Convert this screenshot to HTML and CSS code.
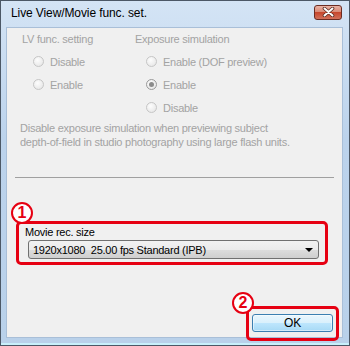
FILE: index.html
```html
<!DOCTYPE html>
<html lang="en">
<head>
    <meta charset="UTF-8">
    <title>Live View/Movie func. set.</title>
    <link rel="stylesheet" href="styles.css">
</head>
<body>
    <div class="window">
        <div class="titleBar">
            <span class="title">Live View/Movie func. set.</span>
            <span class="closeBtn">
                <svg width="13" height="10" viewBox="0 0 13 10">
                    <path d="M2.5 1.5 L10.5 8.5 M10.5 1.5 L2.5 8.5" stroke="#5a2a20" stroke-width="3.6" stroke-linecap="round"/>
                    <path d="M2.5 1.5 L10.5 8.5 M10.5 1.5 L2.5 8.5" stroke="#ffffff" stroke-width="2" stroke-linecap="round"/>
                </svg>
            </span>
        </div>
        <div class="client">
            <div class="settings">
                <div class="group groupLv">
                    <div class="heading">LV func. setting</div>
                    <div class="radio"><span class="dot"></span>Disable</div>
                    <div class="radio"><span class="dot"></span>Enable</div>
                </div>
                <div class="group groupExp">
                    <div class="heading">Exposure simulation</div>
                    <div class="radio"><span class="dot"></span>Enable (DOF preview)</div>
                    <div class="radio"><span class="dot checked"></span>Enable</div>
                    <div class="radio"><span class="dot"></span>Disable</div>
                </div>
            </div>
            <p class="note">Disable exposure simulation when previewing subject<br>depth-of-field in studio photography using large flash units.</p>
            <div class="sep"></div>
            <div class="highlight movieBox">
                <span class="badge badge1">1</span>
                <div class="label">Movie rec. size</div>
                <div class="combo">
                    <span class="comboText">1920x1080  25.00 fps Standard (IPB)</span>
                    <span class="arrow"></span>
                </div>
            </div>
            <div class="footer">
                <div class="highlight okBox">
                    <span class="badge badge2">2</span>
                    <div class="okBtn">OK</div>
                </div>
            </div>
        </div>
    </div>
</body>
</html>
```

FILE: styles.css
```css
body {
    margin: 0;
    font-family: "Liberation Sans", Arial, sans-serif;
    font-size: 11px;
    letter-spacing: -0.25px;
    background: #ffffff;
}
.window {
    box-sizing: border-box;
    width: 350px;
    height: 346px;
    border: 1px solid #4c5866;
    padding: 0 7px 8px 6px;
    background: linear-gradient(#d4e4f5, #bcd3ec 40%, #b9d1ea);
    box-shadow: inset 0 -2px 0 #c8f0fb;
}
.titleBar {
    height: 27px;
    display: flex;
    align-items: center;
    justify-content: space-between;
}
.title {
    margin-left: 4px;
    margin-top: -3px;
    font-size: 12px;
    letter-spacing: -0.1px;
    color: #000000;
}
.closeBtn {
    box-sizing: border-box;
    width: 28px;
    height: 15px;
    margin-top: -5px;
    border: 1px solid #6b2c22;
    border-radius: 3px;
    background: linear-gradient(#eab3a5, #d98a76 45%, #c7472d 50%, #d2705a);
    display: flex;
    align-items: center;
    justify-content: center;
}
.closeBtn svg {
    display: block;
}
.client {
    height: 309px;
    background: #f0f0f0;
    box-shadow: 0 0 0 1px #a9bfd8;
    color: #a3a3a3;
}
.settings {
    display: flex;
}
.group {
    display: flex;
    flex-direction: column;
}
.groupLv {
    width: 113px;
    padding-left: 15px;
}
.heading {
    line-height: 22px;
}
.radio {
    height: 23px;
    display: flex;
    align-items: center;
    padding-left: 11px;
}
.dot {
    box-sizing: border-box;
    width: 11px;
    height: 11px;
    margin-right: 6px;
    border-radius: 50%;
    border: 1px solid #c6c6c6;
    background: radial-gradient(circle at 40% 35%, #fdfdfd, #e2e2e2);
    position: relative;
}
.dot.checked {
    border-color: #9a9a9a;
}
.dot.checked::after {
    content: "";
    position: absolute;
    left: 2px;
    top: 2px;
    width: 5px;
    height: 5px;
    border-radius: 50%;
    background: #8c8c8c;
}
.note {
    margin: 2px 0 0 13px;
    line-height: 14px;
}
.sep {
    height: 1px;
    margin: 28px 8px 0 8px;
    background: #a0a0a0;
}
.highlight {
    position: relative;
    border: 3px solid #e60012;
    border-radius: 5px;
}
.movieBox {
    width: 294px;
    height: 37px;
    margin: 43px 0 0 9px;
    padding: 1px 6px 0 6px;
}
.label {
    color: #000000;
    line-height: 14px;
}
.combo {
    box-sizing: border-box;
    height: 19px;
    margin: 1px 0 0 3px;
    border: 1px solid #707070;
    border-radius: 3px;
    background: linear-gradient(#f2f2f2, #ebebeb 50%, #dddddd 50%, #cfcfcf);
    display: flex;
    align-items: center;
    justify-content: space-between;
    padding: 0 5px 0 4px;
    color: #000000;
}
.comboText {
    white-space: pre;
}
.arrow {
    width: 0;
    height: 0;
    border-left: 4px solid transparent;
    border-right: 4px solid transparent;
    border-top: 4px solid #000000;
}
.badge {
    position: absolute;
    box-sizing: border-box;
    width: 22px;
    height: 22px;
    border: 2px solid #e60012;
    border-radius: 50%;
    background: #ffffff;
    color: #e60012;
    font-weight: bold;
    font-size: 16px;
    letter-spacing: 0;
    line-height: 18px;
    text-align: center;
}
.badge1 {
    left: -8px;
    top: -22px;
}
.badge2 {
    left: -17px;
    top: -17px;
}
.footer {
    display: flex;
    justify-content: flex-end;
    margin-top: 41px;
    padding-right: 3px;
}
.okBox {
    padding: 5px 3px 6px 3px;
}
.okBtn {
    box-sizing: border-box;
    width: 81px;
    height: 18px;
    border: 1px solid #3c7fb1;
    border-radius: 3px;
    background: linear-gradient(#eaf6fd, #d9f0fc 50%, #bee6fd 50%, #a7d9f5);
    box-shadow: inset 0 0 0 1px #ffffff80;
    color: #000000;
    font-size: 12px;
    line-height: 16px;
    text-align: center;
}
```
